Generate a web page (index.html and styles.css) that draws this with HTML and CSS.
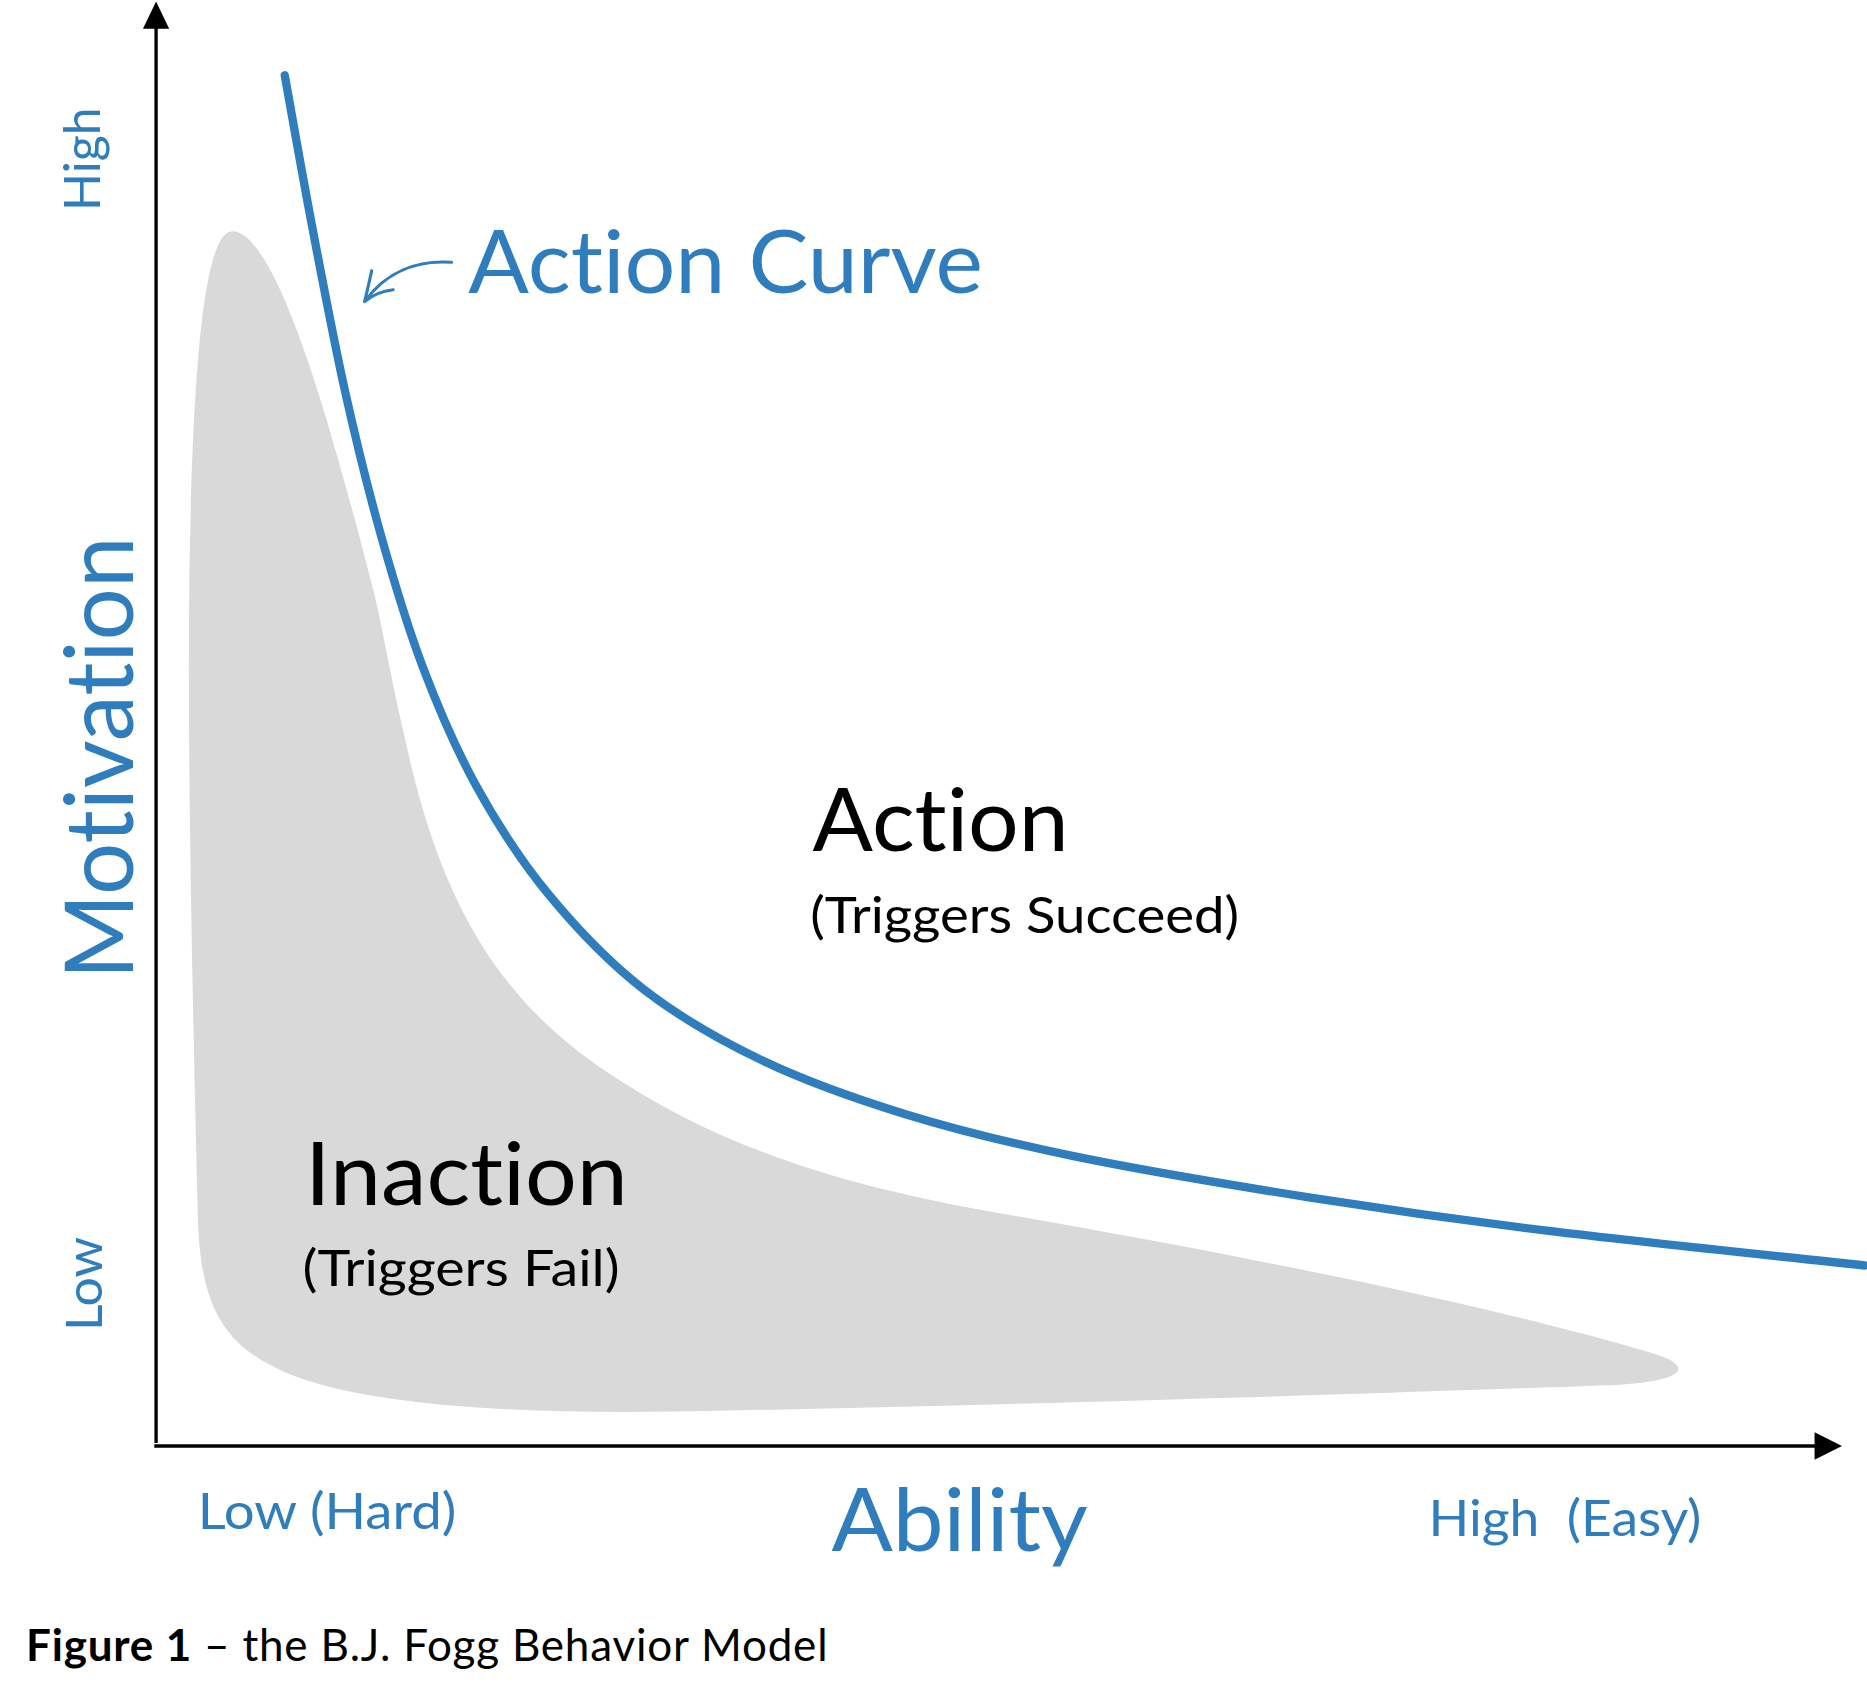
FILE: index.html
```html
<!DOCTYPE html>
<html lang="en">
<head>
<meta charset="utf-8">
<title>B.J. Fogg Behavior Model</title>
<link rel="stylesheet" href="styles.css">
</head>
<body>
<figure class="figure">
  <svg class="chart" viewBox="0 0 1567 1330" xmlns="http://www.w3.org/2000/svg">
    <path class="blob" d="M 195 194 C 172 194, 162 300, 159 480 C 157 650, 162 850, 166 1020 C 168 1100, 190 1130, 240 1152 C 320 1185, 480 1187, 600 1184 C 900 1178, 1200 1168, 1360 1162 C 1420 1158, 1420 1145, 1385 1135 C 1250 1095, 1050 1055, 850 1020 C 700 995, 600 960, 510 900 C 420 840, 370 760, 340 620 C 325 555, 320 520, 312 490 C 285 385, 235 194, 195 194 Z"/>

    <line class="axis" x1="131" y1="1211" x2="131" y2="20"/>
    <polygon class="arrowhead" points="131,1 120,24 142,24"/>
    <line class="axis" x1="129.5" y1="1213.5" x2="1526" y2="1213.5"/>
    <polygon class="arrowhead" points="1546,1213.5 1523,1202 1523,1225"/>

    <path class="curve" d="M 239 63 C 242.8 84.2, 253.5 145.5, 262 190 C 270.5 234.5, 280.3 286.7, 290 330 C 299.7 373.3, 309.2 411.7, 320 450 C 330.8 488.3, 341.7 525, 355 560 C 368.3 595, 382.5 628.3, 400 660 C 417.5 691.7, 436.7 721.7, 460 750 C 483.3 778.3, 510 806.7, 540 830 C 570 853.3, 603.3 872.5, 640 890 C 676.7 907.5, 716.7 921.7, 760 935 C 803.3 948.3, 843.3 958.3, 900 970 C 956.7 981.7, 1033.3 994.5, 1100 1005 C 1166.7 1015.5, 1222.5 1023.5, 1300 1033 C 1377.5 1042.5, 1520.8 1057.2, 1565 1062"/>

    <path class="pointer" d="M 379 220 C 350 218, 324 228, 306 253 M 312 227 C 310 236, 308 245, 306 253 C 313 247, 321 244, 330 243"/>

    <text class="label blue big" x="393" y="246" textLength="432" lengthAdjust="spacingAndGlyphs">Action Curve</text>
    <text class="label dark big" x="682" y="714" textLength="215" lengthAdjust="spacingAndGlyphs">Action</text>
    <text class="label dark small" x="680" y="783" textLength="360" lengthAdjust="spacingAndGlyphs">(Triggers Succeed)</text>
    <text class="label dark big" x="256" y="1011" textLength="271" lengthAdjust="spacingAndGlyphs">Inaction</text>
    <text class="label dark small" x="254" y="1079" textLength="266" lengthAdjust="spacingAndGlyphs">(Triggers Fail)</text>

    <text class="label blue small" x="166" y="1283" textLength="217" lengthAdjust="spacingAndGlyphs">Low (Hard)</text>
    <text class="label blue big" x="698" y="1302" textLength="215" lengthAdjust="spacingAndGlyphs">Ability</text>
    <text class="label blue small" x="1199" y="1289" textLength="229" lengthAdjust="spacingAndGlyphs" xml:space="preserve">High  (Easy)</text>

    <text class="label blue small" transform="translate(84 177) rotate(-90)" textLength="87" lengthAdjust="spacingAndGlyphs">High</text>
    <text class="label blue small" transform="translate(86 1117) rotate(-90)" textLength="79" lengthAdjust="spacingAndGlyphs">Low</text>
    <text class="label blue huge" transform="translate(112 822) rotate(-90)" textLength="372" lengthAdjust="spacingAndGlyphs">Motivation</text>
  </svg>
  <figcaption class="caption"><b class="caption-key">Figure 1</b> – the B.J. Fogg Behavior Model</figcaption>
</figure>
</body>
</html>
```

FILE: styles.css
```css
html, body {
  margin: 0;
  padding: 0;
  background: #ffffff;
}

.figure {
  margin: 0;
  width: 1867px;
  display: flex;
  flex-direction: column;
}

.chart {
  display: block;
  width: 1867px;
  height: 1585px;
}

.blob {
  fill: #d9d9d9;
}

.axis {
  stroke: #000000;
  stroke-width: 2.8;
}

.arrowhead {
  fill: #000000;
}

.curve {
  fill: none;
  stroke: #2f7dbd;
  stroke-width: 7;
  stroke-linecap: round;
  stroke-linejoin: round;
}

.pointer {
  fill: none;
  stroke: #2f7dbd;
  stroke-width: 2.6;
  stroke-linecap: round;
  stroke-linejoin: round;
}

.label {
  font-family: Lato, "Open Sans", "DejaVu Sans", sans-serif;
  font-weight: 400;
  font-variant-ligatures: none;
  font-feature-settings: "liga" 0, "clig" 0;
}

.blue {
  fill: #2f7dbd;
}

.dark {
  fill: #000000;
}

.big {
  font-size: 73px;
}

.small {
  font-size: 43px;
}

.huge {
  font-size: 79px;
}

.caption {
  margin: 33px 0 0 0;
  padding-left: 26px;
  font-family: Lato, "Open Sans", "DejaVu Sans", sans-serif;
  font-size: 44px;
  line-height: 52px;
  letter-spacing: 0.8px;
  font-variant-ligatures: none;
  color: #000000;
}

.caption-key {
  font-weight: 700;
}
```
